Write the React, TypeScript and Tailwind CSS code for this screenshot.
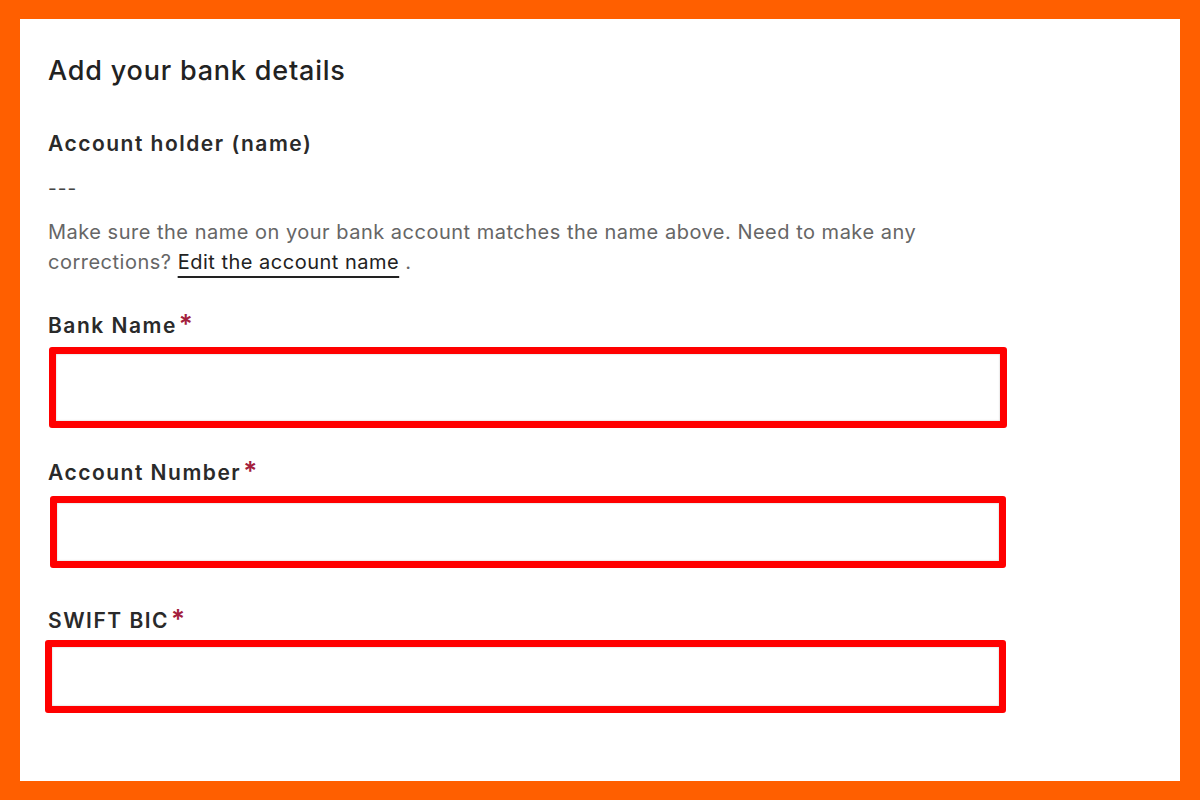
// Bank details form: orange frame, white panel, required fields with red highlight boxes.

const FIELDS = [
  { label: "Bank Name", labelClass: "mt-[37px]", boxClass: "mt-[9px] ml-px h-[81px] w-[958px]" },
  { label: "Account Number", labelClass: "mt-[33px]", boxClass: "mt-[11px] ml-[2px] h-[72px] w-[956px]" },
  { label: "SWIFT BIC", labelClass: "mt-[41px]", boxClass: "mt-[7px] ml-[-3px] h-[73px] w-[961px]" },
];

export default function App() {
  return (
    <div className="h-[800px] w-[1200px] bg-[#ff5f00] px-[20px] pt-[19px] pb-[19px]">
      <div
        className="flex h-full flex-col bg-white pl-[28px] text-[#222222]"
        style={{ fontFamily: "Inter, 'Open Sans', sans-serif" }}
      >
        <h1 className="mt-[36px] text-[27px] leading-[32px] font-medium tracking-[0.8px]">
          Add your bank details
        </h1>

        <div className="mt-[45px] text-[21px] leading-[24px] font-semibold tracking-[1.5px] text-[#2a2a2a]">
          Account holder (name)
        </div>
        <div className="mt-[21px] text-[19px] leading-[24px] tracking-[1px] text-[#444444]">---</div>

        <p className="mt-[16px] text-[20px] leading-[30px] tracking-[0.5px] text-[#666666]">
          Make sure the name on your bank account matches the name above. Need to make any
          <br />
          corrections?{" "}
          <a className="text-[#222222] underline decoration-[2px] underline-offset-[7px]">
            Edit the account name
          </a>{" "}
          .
        </p>

        {FIELDS.map((f) => (
          <div key={f.label} className="flex flex-col">
            <label className={`${f.labelClass} flex items-start text-[21px] leading-[24px] font-semibold tracking-[1.5px] text-[#2a2a2a]`}>
              {f.label}
              <span className="ml-[2px] text-[26px] leading-[20px] text-[#a3203c]">*</span>
            </label>
            <div className={`${f.boxClass} rounded-[3px] border-[7px] border-[#ff0000] bg-white shadow-[inset_0_0_2px_rgba(0,0,0,0.25)]`} />
          </div>
        ))}
      </div>
    </div>
  );
}
